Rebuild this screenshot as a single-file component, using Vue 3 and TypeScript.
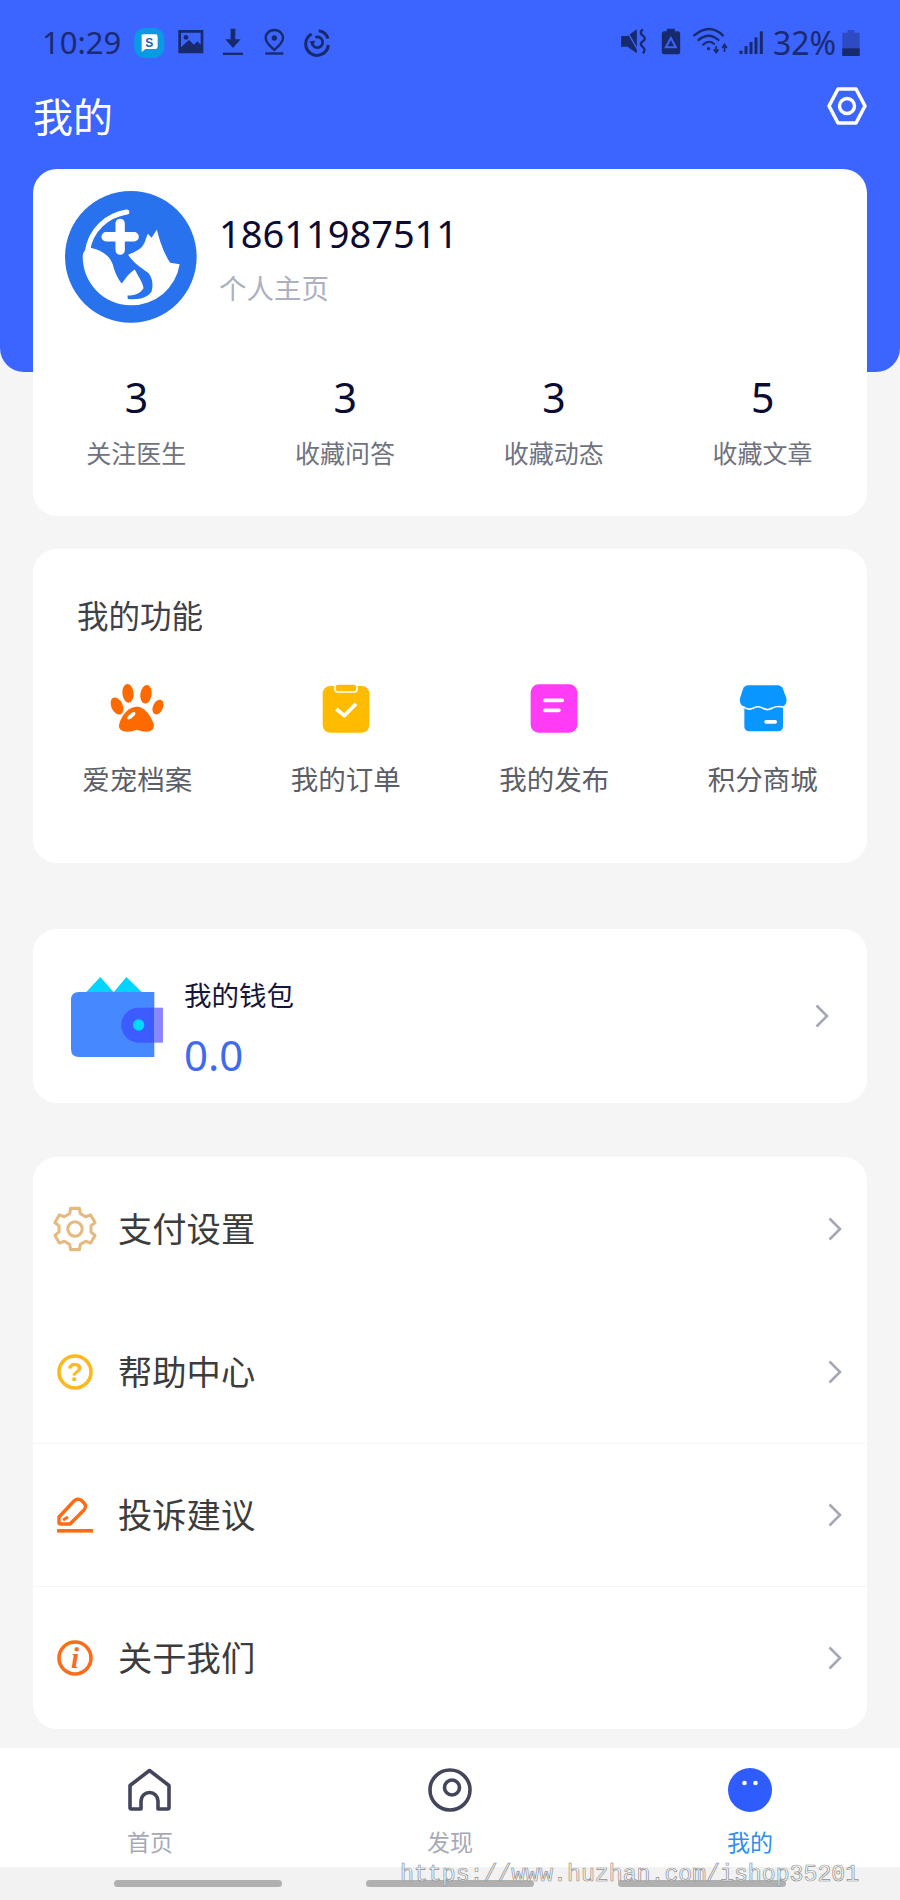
<script setup lang="ts">
interface Stat { value: string; label: string }
const stats: Stat[] = [
  { value: '3', label: '关注医生' },
  { value: '3', label: '收藏问答' },
  { value: '3', label: '收藏动态' },
  { value: '5', label: '收藏文章' },
]

function gearPath(): string {
  const cx = 24
  const cy = 24
  const teeth = 6
  const pts: string[] = []
  const polar = (r: number, deg: number) => {
    const a = (deg * Math.PI) / 180
    return `${(cx + r * Math.cos(a)).toFixed(2)} ${(cy + r * Math.sin(a)).toFixed(2)}`
  }
  for (let i = 0; i < teeth; i++) {
    const m = -90 + i * 60
    pts.push(polar(17, m - 19), polar(22, m - 12), polar(22, m + 12), polar(17, m + 19))
  }
  return `M${pts.join(' L')} Z`
}
const gear = gearPath()
</script>

<template>
  <div class="page">
    <div class="blue-bg"></div>

    <header class="head">
      <div class="status">
        <span class="time">10:29</span>
        <svg class="strip-left" viewBox="0 0 630 135" width="210" height="45">
          <rect x="13" y="24" width="90" height="90" rx="32" fill="#0a9ae4" />
          <path d="M40 43 H76 Q83 43 83 50 V80 Q83 87 76 87 H46 L35 96 V50 Q33 43 40 43 Z" fill="#fff" />
          <text x="58" y="80" font-size="36" font-weight="700" font-family="Liberation Sans" fill="#1a5fb0" text-anchor="middle">S</text>
          <path d="M145 30 H220 V100 H145 Z M153 38 V82 L177 60 L192 74 L202 64 L212 74 V38 Z" fill="#182a6e" fill-rule="evenodd" />
          <circle cx="168" cy="52" r="7" fill="#182a6e" />
          <path d="M302 26 H316 V58 H332 L309 84 L286 58 H302 Z" fill="#182a6e" />
          <rect x="279" y="98" width="60" height="7" fill="#182a6e" />
          <path d="M433 30 C416 30 407 43 407 54 C407 68 424 82 433 90 C442 82 459 68 459 54 C459 43 450 30 433 30 Z" fill="none" stroke="#182a6e" stroke-width="7" />
          <circle cx="433" cy="54" r="8" fill="#182a6e" />
          <rect x="406" y="97" width="54" height="7" fill="#182a6e" />
          <path d="M545 42 A34 34 0 1 0 595 75" fill="none" stroke="#182a6e" stroke-width="9" />
          <path d="M566 32 A34 34 0 0 1 594 56" fill="none" stroke="#182a6e" stroke-width="9" />
          <path d="M546 66 A16 16 0 1 0 556 52" fill="none" stroke="#182a6e" stroke-width="8" />
          <path d="M538 64 L556 62 L548 78 Z" fill="#182a6e" />
        </svg>
        <span class="spacer"></span>
        <svg class="strip-right" viewBox="0 0 470 135" width="157" height="45">
          <path d="M33 48 H52 L80 28 V100 L52 80 H33 Z" fill="#182a6e" />
          <path d="M46 26 L84 92" stroke="#3c64fe" stroke-width="4" />
          <path d="M98 28 Q86 38 98 47 Q110 56 98 64 Q86 72 98 81 Q108 90 98 100" fill="none" stroke="#182a6e" stroke-width="7" />
          <path d="M170 26 H194 V34 H202 Q210 34 210 42 V96 Q210 103 202 103 H162 Q155 103 155 96 V42 Q155 34 163 34 H170 Z" fill="#182a6e" />
          <path d="M182 54 L197 82 H167 Z" fill="none" stroke="#3c64fe" stroke-width="6" />
          <path d="M252 46 Q298 8 338 46" fill="none" stroke="#182a6e" stroke-width="7" stroke-linecap="round" />
          <path d="M265 60 Q296 34 325 60" fill="none" stroke="#182a6e" stroke-width="7" stroke-linecap="round" />
          <path d="M278 74 Q296 58 312 72" fill="none" stroke="#182a6e" stroke-width="6" stroke-linecap="round" />
          <circle cx="295" cy="86" r="5" fill="#182a6e" />
          <path d="M318 78 V96 M311 88 L318 98 L325 88" fill="none" stroke="#182a6e" stroke-width="5" />
          <path d="M343 96 V76 M336 84 L343 73 L350 84" fill="none" stroke="#182a6e" stroke-width="5" />
          <rect x="388" y="92" width="9" height="10" fill="#182a6e" />
          <rect x="403" y="78" width="9" height="24" fill="#182a6e" />
          <rect x="418" y="66" width="9" height="36" fill="#182a6e" />
          <rect x="433" y="52" width="9" height="50" fill="#182a6e" />
          <rect x="449" y="34" width="9" height="68" fill="#182a6e" />
        </svg>
        <span class="pct">32%</span>
        <svg class="batt" viewBox="0 0 52 78" width="18" height="26">
          <path d="M16 0 H36 V8 H52 V78 H0 V8 H16 Z" fill="#2f4bc4" />
          <rect y="55" width="52" height="23" fill="#182a6e" />
        </svg>
      </div>
      <div class="title-row">
        <h1 class="title">我的</h1>
        <svg class="hex" viewBox="0 0 40 38" width="40" height="38">
          <path d="M11 2 H29 L38 19 L29 36 H11 L2 19 Z" fill="none" stroke="#fff" stroke-width="3.6" stroke-linejoin="round" />
          <circle cx="20" cy="19" r="7.5" fill="none" stroke="#fff" stroke-width="3.4" />
        </svg>
      </div>
    </header>

    <section class="card profile">
      <div class="who">
        <svg class="avatar" viewBox="15 15 395 395" width="132" height="132">
          <circle cx="212" cy="212" r="197" fill="#2872ee" />
          <path d="M200 78 C140 88 92 130 82 195" fill="none" stroke="#fff" stroke-width="15" stroke-linecap="round" />
          <path d="M86 184 C120 190 148 205 158 235 C165 262 175 280 185 292 C195 278 205 262 224 250 C232 268 248 288 250 306 C240 322 222 328 202 328 L203 338 C235 342 262 335 274 316 C280 295 276 275 266 262 C250 248 222 235 204 206 C225 196 250 190 257 158 L263 143 L274 155 L290 130 C298 165 315 210 330 230 L358 234 A145 145 0 0 1 212 357 C130 357 68 290 68 212 C68 203 72 192 86 184 Z" fill="#fff" />
          <path d="M180 112 V192 M138 152 H222" stroke="#fff" stroke-width="28" stroke-linecap="round" />
        </svg>
        <div class="who-text">
          <div class="phone">18611987511</div>
          <div class="home-link">个人主页</div>
        </div>
      </div>
      <div class="stats">
        <div v-for="s in stats" :key="s.label" class="stat">
          <div class="stat-value">{{ s.value }}</div>
          <div class="stat-label">{{ s.label }}</div>
        </div>
      </div>
    </section>

    <section class="card funcs">
      <h2 class="funcs-title">我的功能</h2>
      <div class="func-grid">
        <div class="func">
          <svg viewBox="20 26 180 156" width="60" height="52">
            <g fill="#ff6a00">
              <ellipse cx="50" cy="95" rx="17" ry="27" transform="rotate(-25 50 95)" />
              <ellipse cx="83" cy="57" rx="17" ry="28" transform="rotate(-5 83 57)" />
              <ellipse cx="137" cy="60" rx="17" ry="28" transform="rotate(8 137 60)" />
              <ellipse cx="173" cy="98" rx="15" ry="23" transform="rotate(25 173 98)" />
              <path d="M108 97 C130 95 150 120 160 148 C165 172 140 178 110 166 C80 178 50 172 57 148 C65 120 85 98 108 97 Z" />
            </g>
            <ellipse cx="93" cy="124" rx="6" ry="15" transform="rotate(50 93 124)" fill="#fff" />
          </svg>
          <span>爱宠档案</span>
        </div>
        <div class="func">
          <svg viewBox="645 26 180 156" width="60" height="52">
            <rect x="665" y="35" width="140" height="140" rx="22" fill="#ffbb00" />
            <rect x="702" y="29" width="66" height="24" rx="8" fill="#ffbb00" stroke="#fff" stroke-width="5" />
            <path d="M706 104 L730 124 L765 88" fill="none" stroke="#fff" stroke-width="11" stroke-linejoin="round" />
          </svg>
          <span>我的订单</span>
        </div>
        <div class="func">
          <svg viewBox="10 26 180 156" width="60" height="52">
            <rect x="30" y="30" width="140" height="145" rx="24" fill="#ff3bf5" />
            <path d="M72 78 H125 M72 108 H115" stroke="#fff" stroke-width="11" stroke-linecap="round" />
          </svg>
          <span>我的发布</span>
        </div>
        <div class="func">
          <svg viewBox="638 26 180 156" width="60" height="52">
            <rect x="672" y="85" width="116" height="86" rx="14" fill="#0a96ff" />
            <path d="M684 33 H772 Q783 33 788 44 L798 72 Q802 96 780 98 H678 Q656 96 659 72 L668 44 Q673 33 684 33 Z" fill="#0a96ff" />
            <path d="M668 97 Q684 109 700 101 Q714 93 728 102 Q742 110 756 101 Q772 93 790 99" fill="none" stroke="#fff" stroke-width="5" />
            <rect x="732" y="137" width="38" height="11" rx="5" fill="#fff" />
          </svg>
          <span>积分商城</span>
        </div>
      </div>
    </section>

    <section class="card wallet">
      <svg class="wallet-icon" viewBox="122 168 276 240" width="92" height="80">
        <path d="M167 214 L210 168 L250 214 L288 168 L335 214 Z" fill="#00d4ff" />
        <path d="M146 213 H372 V408 H146 Q122 408 122 384 V237 Q122 213 146 213 Z" fill="#4688ff" />
        <rect x="372" y="260" width="26" height="105" fill="#8a86ff" />
        <path d="M372 260 H325 A52 52 0 0 0 325 365 H372 Z" fill="#3d5cff" />
        <circle cx="325" cy="312" r="17" fill="#00d9ff" />
      </svg>
      <div class="wallet-text">
        <div class="wallet-name">我的钱包</div>
        <div class="wallet-value">0.0</div>
      </div>
      <svg class="chev wallet-chev" viewBox="0 0 16 26" width="16" height="26">
        <path d="M2.5 2.5 L13 13 L2.5 23.5" />
      </svg>
    </section>

    <section class="card menu">
      <div class="row">
        <svg class="row-icon" viewBox="0 0 48 48" width="46" height="46">
          <path :d="gear" fill="none" stroke="#e5b97f" stroke-width="3.2" stroke-linejoin="round" />
          <circle cx="24" cy="24" r="7.5" fill="none" stroke="#e5b97f" stroke-width="3.2" />
        </svg>
        <span class="row-text">支付设置</span>
        <svg class="chev" viewBox="0 0 16 26" width="16" height="26"><path d="M2.5 2.5 L13 13 L2.5 23.5" /></svg>
      </div>
      <div class="row">
        <svg class="row-icon" viewBox="0 0 46 46" width="46" height="46">
          <circle cx="23" cy="23" r="16" fill="none" stroke="#fdb81e" stroke-width="3.6" />
          <text x="23" y="32" font-size="26" font-weight="700" font-family="Liberation Sans" fill="#fdb81e" text-anchor="middle">?</text>
        </svg>
        <span class="row-text">帮助中心</span>
        <svg class="chev" viewBox="0 0 16 26" width="16" height="26"><path d="M2.5 2.5 L13 13 L2.5 23.5" /></svg>
      </div>
      <div class="row divided">
        <svg class="row-icon" viewBox="0 0 46 46" width="46" height="46">
          <path d="M7 31 V25 L22 9 Q25 6 29 8 L32 11 Q35 14 32 18 L18 32 H9 Q7 32 7 31 Z" fill="none" stroke="#ff6a13" stroke-width="3.4" stroke-linejoin="round" />
          <path d="M11 28 L16 25" fill="none" stroke="#ff6a13" stroke-width="3" />
          <rect x="5" y="37" width="36" height="3.6" fill="#ff6a13" />
        </svg>
        <span class="row-text">投诉建议</span>
        <svg class="chev" viewBox="0 0 16 26" width="16" height="26"><path d="M2.5 2.5 L13 13 L2.5 23.5" /></svg>
      </div>
      <div class="row divided">
        <svg class="row-icon" viewBox="0 0 46 46" width="46" height="46">
          <circle cx="23" cy="23" r="16" fill="none" stroke="#fb6d1b" stroke-width="3.6" />
          <text x="23" y="33" font-size="29" font-weight="700" font-style="italic" font-family="Liberation Serif" fill="#fb6d1b" text-anchor="middle">i</text>
        </svg>
        <span class="row-text">关于我们</span>
        <svg class="chev" viewBox="0 0 16 26" width="16" height="26"><path d="M2.5 2.5 L13 13 L2.5 23.5" /></svg>
      </div>
    </section>

    <nav class="tabs">
      <div class="tab">
        <svg viewBox="0 0 44 44" width="44" height="44">
          <path d="M21.5 2.5 L41 17.5 V39.5 Q41 41 39.5 41 H30 V33 A8.5 8.5 0 0 0 13 33 V41 H3.5 Q2 41 2 39.5 V17.5 Z" fill="none" stroke="#43465a" stroke-width="3.6" stroke-linejoin="round" />
        </svg>
        <span>首页</span>
      </div>
      <div class="tab">
        <svg viewBox="0 0 44 44" width="44" height="44">
          <circle cx="22" cy="22" r="20" fill="none" stroke="#43465a" stroke-width="3.6" />
          <circle cx="24" cy="19.5" r="7.5" fill="none" stroke="#43465a" stroke-width="3.6" />
        </svg>
        <span>发现</span>
      </div>
      <div class="tab active">
        <svg viewBox="0 0 44 44" width="44" height="44">
          <circle cx="22" cy="22" r="22" fill="#2f5cff" />
          <circle cx="16.5" cy="15" r="2.3" fill="#fff" />
          <circle cx="27.5" cy="15" r="2.3" fill="#fff" />
        </svg>
        <span>我的</span>
      </div>
    </nav>

    <div class="home-bar">
      <i></i><i></i><i></i>
    </div>

    <div class="watermark">https://www.huzhan.com/ishop35201</div>
  </div>
</template>

<style scoped>
.page {
  position: relative;
  width: 900px;
  height: 1900px;
  overflow: hidden;
  background: #f5f5f5;
  font-family: "Noto Sans", "Noto Sans CJK SC", sans-serif;
}
.blue-bg {
  position: absolute;
  left: 0;
  top: 0;
  width: 900px;
  height: 372px;
  background: #3c64fe;
  border-radius: 0 0 24px 24px;
}
.head {
  position: relative;
  height: 169px;
}
.status {
  display: flex;
  align-items: center;
  height: 45px;
  padding: 20px 40px 0 42px;
  color: #1b2b72;
}
.time {
  width: 88px;
  font-size: 31px;
  line-height: 45px;
}
.spacer {
  flex: 1;
}
.pct {
  width: 75px;
  font-size: 32px;
  line-height: 45px;
  text-align: center;
}
.title-row {
  display: flex;
  justify-content: space-between;
  align-items: flex-start;
  padding: 0 33px;
}
.title {
  margin: 24px 0 0;
  font-size: 40px;
  font-weight: 400;
  line-height: 56px;
  color: #fff;
}
.hex {
  margin-top: 22px;
}
.card {
  position: relative;
  margin: 0 33px;
  background: #fff;
  border-radius: 24px;
}
.profile {
  height: 347px;
  box-sizing: border-box;
  padding-top: 22px;
}
.who {
  display: flex;
  align-items: center;
  gap: 22px;
  padding-left: 32px;
}
.avatar {
  display: block;
}
.who-text {
  padding-top: 4px;
}
.phone {
  font-size: 38px;
  line-height: 50px;
  color: #0b0b33;
}
.home-link {
  margin-top: 10px;
  font-size: 27.5px;
  line-height: 42px;
  color: #adb0c0;
}
.stats {
  display: grid;
  grid-template-columns: repeat(4, 1fr);
  margin-top: 46px;
  margin-left: -1px;
}
.stat {
  text-align: center;
}
.stat-value {
  font-size: 41px;
  line-height: 56px;
  color: #0b0b33;
}
.stat-label {
  margin-top: 8px;
  font-size: 25px;
  line-height: 40px;
  color: #6f7280;
}
.funcs {
  margin-top: 33px;
  height: 314px;
  box-sizing: border-box;
  padding-top: 44px;
}
.funcs-title {
  margin: 0;
  padding-left: 44px;
  font-size: 31.5px;
  font-weight: 400;
  line-height: 46px;
  color: #404148;
}
.func-grid {
  display: grid;
  grid-template-columns: repeat(4, 1fr);
  margin-top: 44px;
}
.func {
  display: flex;
  flex-direction: column;
  align-items: center;
  font-size: 27.5px;
  line-height: 40px;
  color: #5c5e68;
}
.func span {
  margin-top: 25px;
}
.wallet {
  margin-top: 66px;
  height: 174px;
  display: flex;
  align-items: center;
  padding: 0 37px 0 38px;
  box-sizing: border-box;
}
.wallet-icon {
  margin-right: 21px;
  margin-top: 1px;
}
.wallet-text {
  flex: 1;
  padding-top: 28px;
}
.wallet-name {
  font-size: 27.5px;
  line-height: 38px;
  color: #16163a;
}
.wallet-value {
  margin-top: 12px;
  font-size: 42px;
  line-height: 56px;
  color: #3f6af0;
}
.chev {
  display: block;
  fill: none;
  stroke: #a4a8b6;
  stroke-width: 2.6;
}
.menu {
  margin-top: 54px;
  height: 572px;
}
.row {
  display: flex;
  align-items: center;
  height: 143px;
  box-sizing: border-box;
  padding: 0 24px 0 19px;
}
.divided {
  border-top: 1px solid #f5f5f5;
}
.row-icon {
  display: block;
  flex: none;
}
.row-text {
  flex: 1;
  margin-left: 20px;
  font-size: 34.3px;
  line-height: 46px;
  color: #3c3c3c;
}
.tabs {
  position: relative;
  margin-top: 19px;
  height: 119px;
  background: #fff;
  display: grid;
  grid-template-columns: repeat(3, 1fr);
}
.tab {
  display: flex;
  flex-direction: column;
  align-items: center;
  padding-top: 20px;
  font-size: 23px;
  line-height: 34px;
  color: #a8a9b8;
}
.tab svg {
  display: block;
  margin-bottom: 13px;
}
.tab.active {
  color: #2f8ff0;
}
.home-bar {
  position: absolute;
  left: 0;
  right: 0;
  bottom: 0;
  height: 33px;
  background: #f2f2f2;
  display: flex;
  justify-content: center;
  gap: 84px;
  box-sizing: border-box;
  padding-top: 13px;
}
.home-bar i {
  display: block;
  width: 168px;
  height: 7px;
  border-radius: 4px;
  background: #b0b0b0;
}
.watermark {
  position: absolute;
  left: 400px;
  top: 1862px;
  font-family: "Liberation Mono", monospace;
  font-size: 23.2px;
  line-height: 26px;
  color: rgba(255, 255, 255, 0.65);
  -webkit-text-stroke: 0.7px #8f8f8f;
  white-space: nowrap;
}
</style>
